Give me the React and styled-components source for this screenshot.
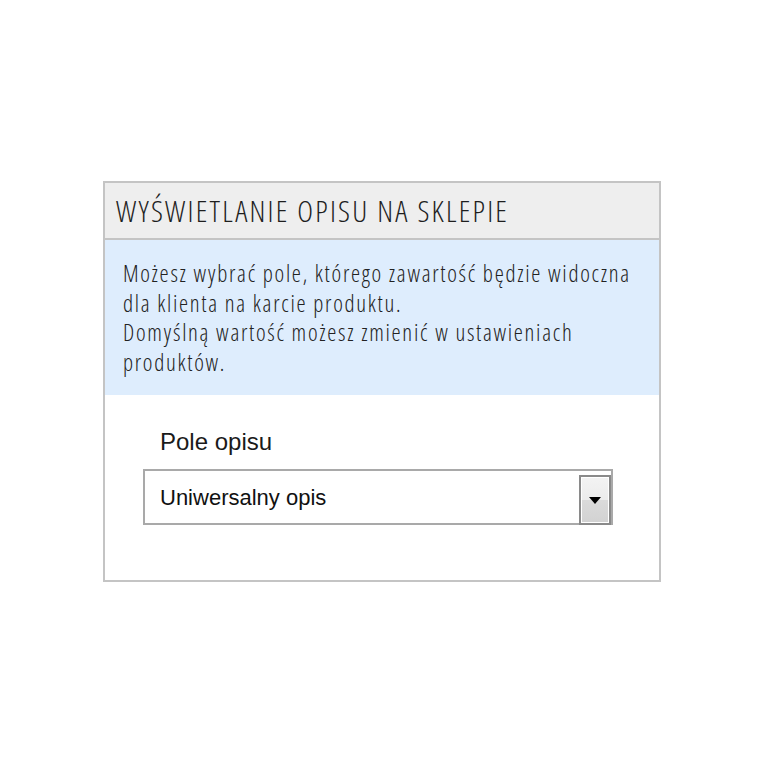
import React from 'react';
import styled, { createGlobalStyle } from 'styled-components';

const GlobalStyle = createGlobalStyle`
  html, body {
    margin: 0;
    padding: 0;
    background: #ffffff;
  }
  body {
    font-family: 'Liberation Sans', Arial, sans-serif;
  }
`;

const Page = styled.div`
  padding-top: 181px;
  display: flex;
  justify-content: center;
`;

const Panel = styled.section`
  width: 554px;
  border: 2px solid #c4c4c4;
  margin-left: -4px;
  background: #ffffff;
`;

const Header = styled.header`
  height: 55px;
  display: flex;
  align-items: center;
  padding-left: 11px;
  background: #eeeeee;
  border-bottom: 2px solid #c4c4c4;
  font-family: 'Open Sans', sans-serif;
  font-stretch: 75%;
  font-weight: 300;
  font-size: 30px;
  color: #1e1e1e;
  letter-spacing: 2.2px;
`;

const Info = styled.div`
  background: #deedfd;
  padding: 19px 10px 18px 18px;
  font-family: 'Open Sans', sans-serif;
  font-stretch: 75%;
  font-weight: 360;
  font-size: 23px;
  line-height: 29.5px;
  letter-spacing: 1.7px;
  white-space: nowrap;
  color: #222222;
`;

const Form = styled.div`
  padding: 30px 46px 55px 38px;
`;

const Label = styled.label`
  display: block;
  margin-left: 17px;
  margin-bottom: 10px;
  font-size: 24px;
  line-height: 34px;
  color: #1a1a1a;
`;

const Select = styled.div`
  height: 50px;
  border: 2px solid #a9a9a9;
  display: flex;
  align-items: center;
  justify-content: space-between;
  padding: 2px 0 0 15px;
  font-size: 22px;
  color: #111111;
`;

const Arrow = styled.span`
  align-self: stretch;
  width: 28px;
  margin: 2px 0 -2px;
  border: 2px solid #8a8a8a;
  box-shadow: inset 0 0 0 1px #ffffff;
  background: linear-gradient(#f3f3f3 0%, #ececec 50%, #dadada 51%, #d2d2d2 100%);
  display: flex;
  align-items: center;
  justify-content: center;

  &::after {
    content: '';
    border-left: 6px solid transparent;
    border-right: 6px solid transparent;
    border-top: 7px solid #000000;
  }
`;

export default function App() {
  return (
    <Page>
      <GlobalStyle />
      <Panel>
        <Header>WYŚWIETLANIE OPISU NA SKLEPIE</Header>
        <Info>
          Możesz wybrać pole, którego zawartość będzie widoczna
          <br />
          dla klienta na karcie produktu.
          <br />
          Domyślną wartość możesz zmienić w ustawieniach
          <br />
          produktów.
        </Info>
        <Form>
          <Label>Pole opisu</Label>
          <Select>
            <span>Uniwersalny opis</span>
            <Arrow />
          </Select>
        </Form>
      </Panel>
    </Page>
  );
}
